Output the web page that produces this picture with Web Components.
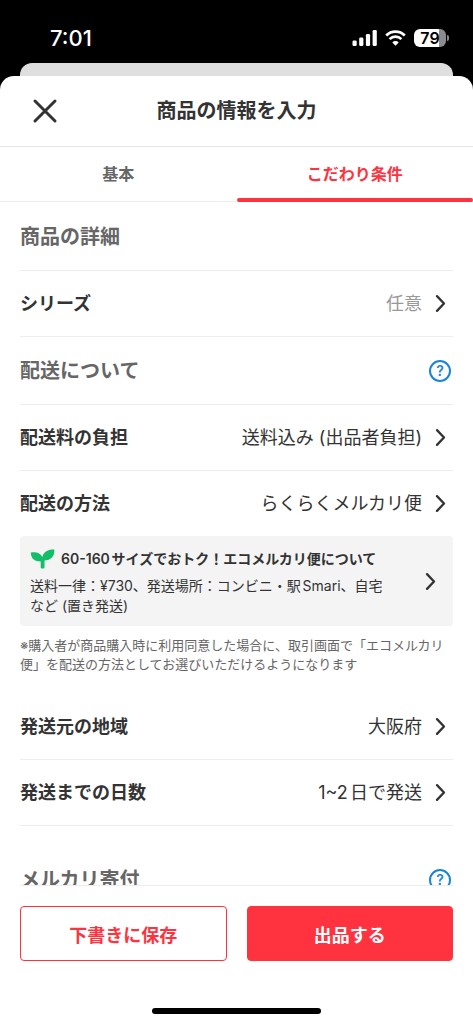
<!DOCTYPE html>
<html lang="ja">
<head>
<meta charset="utf-8">
<meta name="viewport" content="width=device-width, initial-scale=1">
<title>商品の情報を入力</title>
<style>
  :root { --red: #ff333f; --ink: #333; --muted: #666; --faint: #999; --line: #ededed; --blue: #1a84dc; }
  body { margin: 0; background: #000; color: var(--ink); font-family: Inter, "Noto Sans CJK JP", sans-serif; font-size: 18px; text-autospace: normal; }
</style>
</head>
<body>
<listing-app>
  <status-bar slot="status" time="7:01" battery="79"></status-bar>
  <sheet-header slot="header">商品の情報を入力</sheet-header>
  <tab-bar slot="header"></tab-bar>
  <form-section heading="商品の詳細">
    <setting-row label="シリーズ" placeholder>任意</setting-row>
  </form-section>
  <form-section heading="配送について" help>
    <setting-row label="配送料の負担">送料込み (出品者負担)</setting-row>
    <setting-row label="配送の方法" plain>らくらくメルカリ便</setting-row>
    <promo-card>
      <span slot="title">60-160サイズでおトク！エコメルカリ便について</span>
      送料一律：¥730、発送場所：コンビニ・駅Smari、自宅など (置き発送)
    </promo-card>
    <foot-note>※購入者が商品購入時に利用同意した場合に、取引画面で「エコメルカリ便」を配送の方法としてお選びいただけるようになります</foot-note>
    <setting-row label="発送元の地域">大阪府</setting-row>
    <setting-row label="発送までの日数">1~2日で発送</setting-row>
  </form-section>
  <form-section heading="メルカリ寄付" help spaced></form-section>
  <action-bar slot="footer"></action-bar>
</listing-app>

<script>
const chevron = `<svg class="chevron" width="26" height="26" viewBox="0 0 26 26" fill="none" stroke="#333" stroke-width="2.3" stroke-linecap="round" stroke-linejoin="round" aria-hidden="true"><path d="M10 5.1 17 12.500l-7 7.4"/></svg>`;

const reset = `:host,*,*::after{box-sizing:border-box}
button{font:inherit;color:inherit;background:none;border:0;padding:0;margin:0;text-align:left;cursor:pointer}
svg{display:block;flex:none}`;

function define(name, render) {
  customElements.define(name, class extends HTMLElement {
    constructor() { super(); this.attachShadow({ mode: 'open' }); }
    connectedCallback() {
      const { css, html } = render(this);
      this.shadowRoot.innerHTML = `<style>${reset}${css}</style>${html}`;
    }
  });
}

define('listing-app', () => ({
  css: `:host{display:flex;flex-direction:column;height:100vh}
    .behind{flex:none;height:13px;margin:0 20px;background:#dfdfdf;border-radius:12px 12px 0 0}
    .sheet{flex:1;min-height:0;display:flex;flex-direction:column;background:#fff;border-radius:14px 14px 0 0}
    main{flex:1;min-height:0;overflow-y:auto;scrollbar-width:none;padding:0 20px}`,
  html: `<slot name="status"></slot><div class="behind"></div>
    <div class="sheet"><slot name="header"></slot><main><slot></slot></main><slot name="footer"></slot></div>`
}));

define('status-bar', el => ({
  css: `:host{display:flex;flex:none;justify-content:space-between;align-items:center;height:63px;padding:12px 24px 0 50px;color:#fff}
    time{font-size:22px;line-height:28px;font-weight:500}
    .icons{display:flex;align-items:center;gap:8px}
    .power{display:flex;align-items:center;gap:1px}
    .battery{width:32px;height:18px;border-radius:6px;background:linear-gradient(90deg,#fff 79%,#8c8c8c 79%);color:#000;font-size:16px;line-height:18px;font-weight:600;text-align:center}
    .nub{width:2px;height:6px;border-radius:0 2px 2px 0;background:#8c8c8c}`,
  html: `<time>${el.getAttribute('time')}</time>
    <div class="icons">
      <svg width="26" height="18" viewBox="0 0 26 18" fill="#fff"><rect x="1.500" y="11.500" width="4.200" height="5.500" rx="1.3"/><rect x="8.200" y="8.500" width="4.200" height="8.500" rx="1.3"/><rect x="14.900" y="5" width="4.200" height="12" rx="1.3"/><rect x="21.600" y="1" width="4.200" height="16" rx="1.3"/></svg>
      <svg width="21" height="16" viewBox="0 0 21 16" fill="none" stroke="#fff" stroke-width="2.7"><path d="M1.2 5.5a13.2 13.2 0 0 1 18.6 0M4.6 9.1a8.4 8.4 0 0 1 11.8 0"/><path d="M10.5 15.7 7.3 12.4a4.6 4.6 0 0 1 6.4 0z" fill="#fff" stroke="none"/></svg>
      <div class="power"><div class="battery">${el.getAttribute('battery')}</div><div class="nub"></div></div>
    </div>`
}));

define('sheet-header', () => ({
  css: `:host{display:grid;grid-template-columns:50px 1fr 50px;align-items:center;flex:none;height:71px;padding:0 20px;border-bottom:1px solid #e5e5e5}
    button{width:50px;height:50px;display:grid;place-items:center}
    h1{margin:0;text-align:center;font-size:20px;line-height:28px;font-weight:600}`,
  html: `<button aria-label="閉じる"><svg width="26" height="26" viewBox="0 0 26 26" stroke="#333" stroke-width="3" stroke-linecap="round"><path d="M3 3l20 20M23 3 3 23"/></svg></button><h1><slot></slot></h1>`
}));

define('tab-bar', () => ({
  css: `:host{display:block;flex:none}
    div{display:grid;grid-template-columns:1fr 1fr;height:55px;margin-bottom:1px;box-shadow:inset 0 -1px var(--line)}
    button{text-align:center;font-size:16px;line-height:24px;font-weight:600;color:var(--muted);display:flex;flex-direction:column}
    span{flex:1;display:grid;place-items:center;width:100%;padding-top:2px}
    button::after{content:"";height:4px;width:100%;border-radius:2px}
    [aria-selected=true]{color:var(--red)}
    [aria-selected=true]::after{background:var(--red)}`,
  html: `<div role="tablist"><button role="tab" aria-selected="false"><span>基本</span></button><button role="tab" aria-selected="true"><span>こだわり条件</span></button></div>`
}));

define('help-button', () => ({
  css: `:host{display:grid;place-items:center;width:26px}
    button{width:22px;height:22px;border:2px solid var(--blue);border-radius:50%;color:var(--blue);font-size:14px;line-height:18px;font-weight:600;text-align:center}`,
  html: `<button aria-label="ヘルプ">?</button>`
}));

define('form-section', el => ({
  css: `:host{display:block}
    :host([spaced]){margin-top:20px}
    header{display:flex;align-items:center;justify-content:space-between;height:68px;border-bottom:1px solid var(--line)}
    h2{margin:0;font-size:20px;line-height:28px;font-weight:600;color:var(--muted)}`,
  html: `<header><h2>${el.getAttribute('heading')}</h2>${el.hasAttribute('help') ? '<help-button></help-button>' : ''}</header><slot></slot>`
}));

define('setting-row', el => ({
  css: `:host{display:block;border-bottom:1px solid var(--line)}
    :host([plain]){border-bottom:0}
    button{display:flex;align-items:center;width:100%;height:65px;gap:5px;line-height:26px}
    .label{flex:1;font-weight:600}
    :host([placeholder]) .value{color:var(--faint)}`,
  html: `<button><span class="label">${el.getAttribute('label')}</span><span class="value"><slot></slot></span>${chevron}</button>`
}));

define('promo-card', () => ({
  css: `:host{display:block}
    button{display:flex;align-items:center;gap:28px;width:100%;padding:12px 10px 10px;border-radius:4px;background:#f4f4f4;font-size:14px;line-height:20px}
    .text{flex:1;display:flex;flex-direction:column;gap:6px}
    .title{display:flex;align-items:center;gap:6px;line-height:22px;font-weight:600;white-space:nowrap}`,
  html: `<button><span class="text"><span class="title">
      <svg width="25" height="20" viewBox="0 0 25 20" fill="#12bf68"><path d="M.8 3.500C6 2.400 10.500 3.800 12.300 8 13.500 3 17.500.3 24.300.5c.5 6.500-3.200 10.600-9.800 10.900V18.600q0 1-1 1h-1.800q-1 0-1-1V12.500C4.600 12.500.8 9.300.8 3.500z"/></svg>
      <slot name="title"></slot></span><span><slot></slot></span></span>${chevron}</button>`
}));

define('foot-note', () => ({
  css: `:host{display:block;padding:10px 0 20px;font-size:13px;line-height:19px;color:var(--muted)}
    p{margin:0}`,
  html: `<p><slot></slot></p>`
}));

define('action-bar', () => ({
  css: `:host{display:block;flex:none;padding:0 20px 10px}
    .actions{display:grid;grid-template-columns:1fr 1fr;gap:20px;padding:20px 0 47px;border-top:1px solid var(--line)}
    button{height:55px;border:1px solid var(--red);border-radius:4px;text-align:center;font-weight:600;color:var(--red)}
    .primary{background:var(--red);color:#fff}
    .home{width:169px;height:6px;margin:0 auto;border-radius:3px;background:#000}`,
  html: `<div class="actions"><button>下書きに保存</button><button class="primary">出品する</button></div><div class="home"></div>`
}));
</script>
</body>
</html>
